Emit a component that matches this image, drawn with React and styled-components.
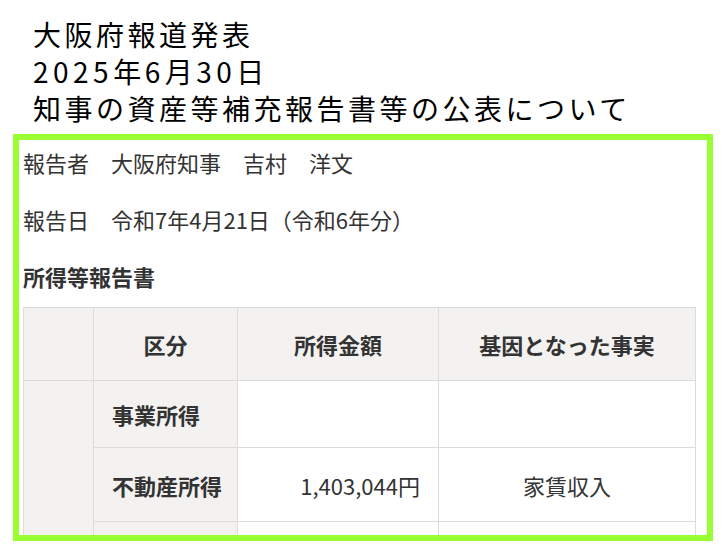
import React from "react";
import styled, { createGlobalStyle } from "styled-components";

const Global = createGlobalStyle`
  html, body { margin: 0; padding: 0; background: #fff; }
  body { font-family: "Noto Sans CJK JP", "Noto Sans", sans-serif; }
`;

const Page = styled.div`
  width: 728px;
  height: 554px;
  overflow: hidden;
  padding-top: 16px;
  box-sizing: border-box;
`;

const Title = styled.h1`
  margin: 0 0 7px 33px;
  font-size: 28px;
  font-weight: 400;
  line-height: 37px;
  letter-spacing: 3.5px;
  color: #000;
`;

const Digits = styled.span`
  letter-spacing: 4.5px;
`;

const Frame = styled.section`
  margin-left: 13px;
  width: 700px;
  height: 407px;
  box-sizing: border-box;
  border: 6px solid #99ff33;
  overflow: hidden;
  padding: 6px 12px 0 4px;
  color: #333;
  font-size: 22px;
`;

const Info = styled.p`
  margin: 0 0 24px;
  line-height: 33px;
  font-size: 22px;
`;

const Heading = styled.h3`
  margin: 0 0 14px;
  line-height: 33px;
  font-size: 22px;
  font-weight: 700;
`;

const Table = styled.table`
  width: 672px;
  border-collapse: collapse;
  table-layout: fixed;
  font-size: 22px;
`;

const Th = styled.th`
  background: #f3f2f1;
  border: 1px solid #dddcdb;
  font-weight: 700;
  text-align: ${(p) => p.$align || "center"};
  padding: ${(p) => (p.$align === "left" ? "0 0 0 18px" : "0")};
  height: ${(p) => p.$h || 66}px;
  vertical-align: middle;
  color: #333;
`;

const Td = styled.td`
  background: #fff;
  border: 1px solid #dddcdb;
  text-align: ${(p) => p.$align || "center"};
  padding: ${(p) => (p.$align === "right" ? "0 18px 0 0" : "0")};
  vertical-align: middle;
  color: #333;
`;

const rows = [
  { key: "a", label: "事業所得", amount: "", fact: "", h: 66 },
  { key: "b", label: "不動産所得", amount: "1,403,044円", fact: "家賃収入", h: 73 },
  { key: "c", label: "", amount: "", fact: "", h: 66 },
];

export default function App() {
  return (
    <Page>
      <Global />
      <Title>
        大阪府報道発表
        <br />
        <Digits>2025</Digits>年<Digits>6</Digits>月<Digits>30</Digits>日
        <br />
        知事の資産等補充報告書等の公表について
      </Title>
      <Frame>
        <Info>報告者　大阪府知事　吉村　洋文</Info>
        <Info>報告日　令和7年4月21日（令和6年分）</Info>
        <Heading>所得等報告書</Heading>
        <Table>
          <colgroup>
            <col style={{ width: 70 }} />
            <col style={{ width: 144 }} />
            <col style={{ width: 201 }} />
            <col style={{ width: 257 }} />
          </colgroup>
          <thead>
            <tr>
              <Th $h={72} />
              <Th $h={72}>区分</Th>
              <Th $h={72}>所得金額</Th>
              <Th $h={72}>基因となった事実</Th>
            </tr>
          </thead>
          <tbody>
            {rows.map((r, i) => (
              <tr key={r.key}>
                {i === 0 && <Th rowSpan={rows.length} />}
                <Th $align="left" $h={r.h}>
                  {r.label}
                </Th>
                <Td $align="right">{r.amount}</Td>
                <Td>{r.fact}</Td>
              </tr>
            ))}
          </tbody>
        </Table>
      </Frame>
    </Page>
  );
}
